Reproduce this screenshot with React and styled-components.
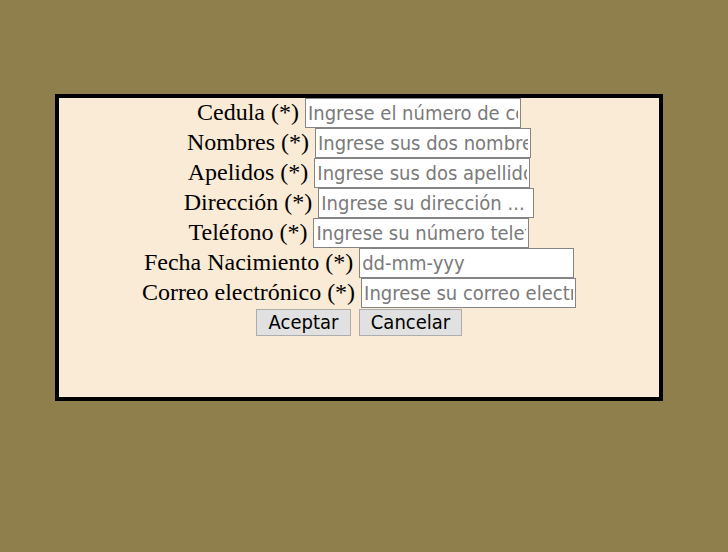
import React from 'react'
import styled, { createGlobalStyle } from 'styled-components'

const Global = createGlobalStyle`
  html, body {
    margin: 0;
    padding: 0;
    background: #8f7f4d;
    min-height: 100%;
  }
  body {
    font-family: "Liberation Serif", "Times New Roman", serif;
  }
`

const Page = styled.div`
  padding: 94px 0 0 55px;
`

const Card = styled.div`
  width: 600px;
  height: 299px;
  border: 4px solid #000;
  background: #faebd7;
`

const Form = styled.form`
  display: flex;
  flex-direction: column;
`

const Row = styled.div`
  display: flex;
  justify-content: center;
  align-items: baseline;
  gap: 6px;
  height: 30px;
`

const Label = styled.label`
  font-size: 24px;
  line-height: 24px;
  color: #000;
  white-space: nowrap;
`

const Input = styled.input`
  box-sizing: border-box;
  width: ${p => p.$w || 216}px;
  height: 30px;
  margin: 0;
  padding: 1px 2px;
  border: 1px solid #858585;
  background: #fff;
  font-family: "DejaVu Sans Condensed", "DejaVu Sans", sans-serif;
  font-size: 20px;
  color: #000;
  outline: none;
  &::placeholder {
    color: #7a7a7a;
  }
`

const Actions = styled.div`
  display: flex;
  justify-content: center;
  gap: 8px;
  padding-top: 1px;
`

const Button = styled.button`
  box-sizing: border-box;
  height: 27px;
  width: ${p => p.$w}px;
  margin: 0;
  padding: 0;
  background: #e1e1e1;
  border: 1px solid #adadad;
  font-family: "DejaVu Sans Condensed", "DejaVu Sans", sans-serif;
  font-size: 20px;
  line-height: 25px;
  color: #000;
`

const fields = [
  { label: 'Cedula (*)', ph: 'Ingrese el número de cedula' },
  { label: 'Nombres (*)', ph: 'Ingrese sus dos nombres' },
  { label: 'Apelidos (*)', ph: 'Ingrese sus dos apellidos' },
  { label: 'Dirección (*)', ph: 'Ingrese su dirección ...' },
  { label: 'Teléfono (*)', ph: 'Ingrese su número telefónico' },
  { label: 'Fecha Nacimiento (*)', ph: 'dd-mm-yyy', w: 215 },
  { label: 'Correo electrónico (*)', ph: 'Ingrese su correo electrónico', w: 215 },
]

const App = () => {
  return (
    <Page>
      <Global />
      <Card>
        <Form onSubmit={e => e.preventDefault()}>
          {fields.map(f => (
            <Row key={f.label}>
              <Label>{f.label}</Label>
              <Input type="text" placeholder={f.ph} $w={f.w} />
            </Row>
          ))}
          <Actions>
            <Button type="submit" $w={95}>Aceptar</Button>
            <Button type="button" $w={103}>Cancelar</Button>
          </Actions>
        </Form>
      </Card>
    </Page>
  )
}

export default App
